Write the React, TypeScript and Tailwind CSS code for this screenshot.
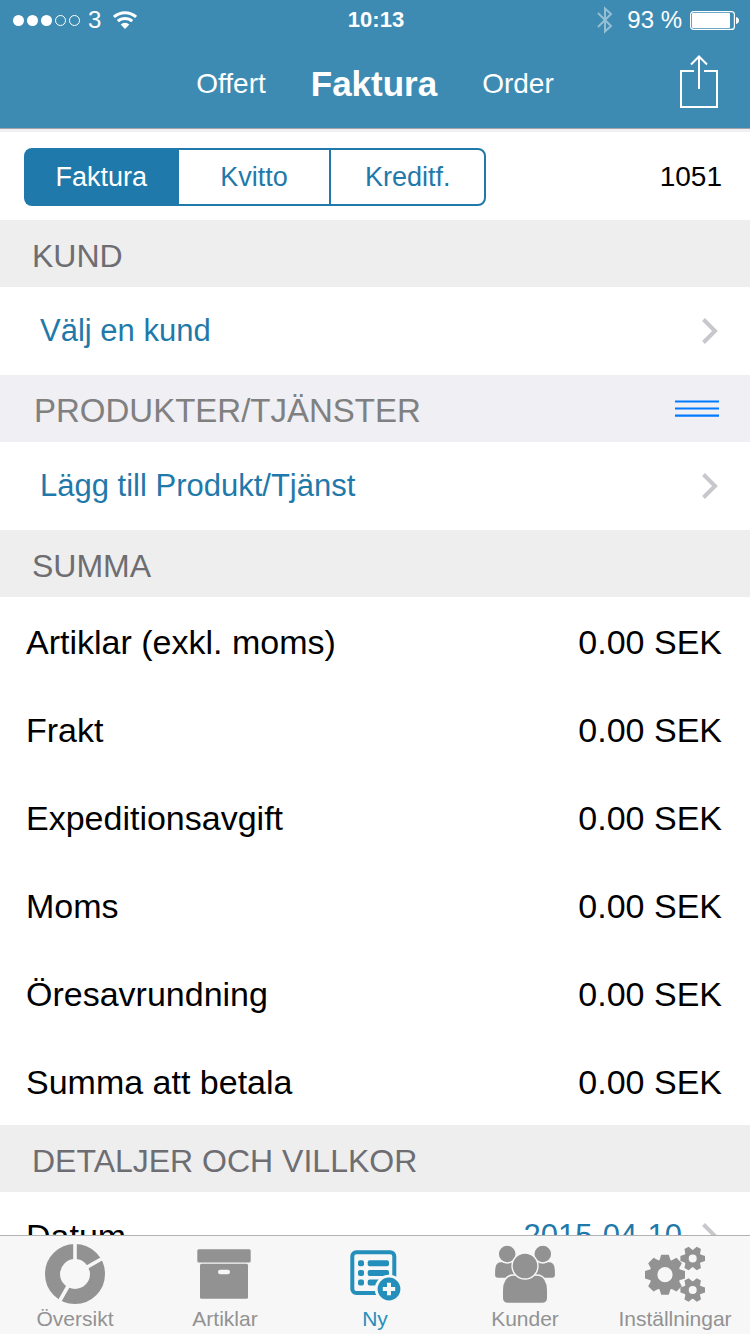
import React, { useState } from "react";

const totals = [
  { label: "Artiklar (exkl. moms)", value: "0.00 SEK" },
  { label: "Frakt", value: "0.00 SEK" },
  { label: "Expeditionsavgift", value: "0.00 SEK" },
  { label: "Moms", value: "0.00 SEK" },
  { label: "Öresavrundning", value: "0.00 SEK" },
  { label: "Summa att betala", value: "0.00 SEK" },
];

const Chevron: React.FC = () => (
  <svg className="w-4 h-[26px] shrink-0" viewBox="0 0 16 26" fill="none" stroke="#c7c7cc" strokeWidth="4" aria-hidden="true">
    <path d="M1.5 1.5L13 13L1.5 24.5" />
  </svg>
);

const StatusBar: React.FC = () => (
  <div className="grid grid-cols-[1fr_auto_1fr] items-center h-10 pl-[13px] pr-[11px] text-2xl leading-none">
    <div className="flex items-center">
      <svg className="w-[67px] h-[11px]" viewBox="0 0 67 11" fill="#fff" aria-hidden="true">
        <circle cx="5.5" cy="5.5" r="5.5" />
        <circle cx="19.5" cy="5.5" r="5.5" />
        <circle cx="33.5" cy="5.5" r="5.5" />
        <g fill="none" stroke="#fff" strokeWidth="1">
          <circle cx="47.5" cy="5.5" r="5" />
          <circle cx="61.5" cy="5.5" r="5" />
        </g>
      </svg>
      <span className="ml-2">3</span>
      <svg className="ml-3 w-6 h-[18px]" viewBox="0 0 24 18" fill="none" stroke="#fff" strokeWidth="3" aria-hidden="true">
        <path d="M0.9 6A16.5 16.5 0 0 1 23.1 6" />
        <path d="M4.8 10.2A10.6 10.6 0 0 1 19.2 10.2" />
        <path d="M12 18L7.7 13.4A6.3 6.3 0 0 1 16.3 13.4Z" fill="#fff" stroke="none" />
      </svg>
    </div>
    <span className="text-[22px] font-bold">10:13</span>
    <div className="flex items-center justify-end">
      <svg className="w-4 h-7 opacity-45" viewBox="0 0 16 28" fill="none" stroke="#fff" strokeWidth="2" aria-hidden="true">
        <path d="M1 7L14 20L8 25.5V2.5L14 8L1 21" />
      </svg>
      <span className="ml-3.5">93 %</span>
      <svg className="ml-2 w-[49px] h-[19px]" viewBox="0 0 49 19" aria-hidden="true">
        <rect x="0.6" y="0.6" width="43.8" height="17.8" rx="3" fill="none" stroke="#fff" strokeWidth="1.2" />
        <rect x="2" y="2" width="38" height="15" rx="1" fill="#fff" />
        <path d="M46 6C48 6.5 49 7.5 49 9.5S48 12.5 46 13Z" fill="#fff" />
      </svg>
    </div>
  </div>
);

const SectionHeader: React.FC<{ title: string }> = ({ title }) => (
  <h2 className="flex items-center h-[67px] pt-1 pl-8 bg-[#eeeeee] text-[32px] leading-none text-[#6d6d72]">{title}</h2>
);

const LinkRow: React.FC<{ label: string }> = ({ label }) => (
  <button type="button" className="flex items-center justify-between w-full h-[88px] pl-10 pr-8 text-[31px] text-[#1f79aa] text-left">
    <span>{label}</span>
    <Chevron />
  </button>
);

const Gear: React.FC<{ cx: number; cy: number; r: number; body: number; hole: number; teeth: number; tooth: number }> = ({ cx, cy, r, body, hole, teeth, tooth }) => (
  <g transform={`translate(${cx} ${cy})`}>
    <circle r={(body + hole) / 2} fill="none" stroke="currentColor" strokeWidth={body - hole} />
    {Array.from({ length: teeth }, (_, i) => (
      <path
        key={i}
        fill="currentColor"
        transform={`rotate(${(360 / teeth) * i})`}
        d={`M${body - 2} ${-tooth - 1}L${r} ${-tooth + 1}V${tooth - 1}L${body - 2} ${tooth + 1}Z`}
      />
    ))}
  </g>
);

const tabs = [
  {
    label: "Översikt",
    icon: (
      <>
        <circle cx="30" cy="30" r="22.5" fill="none" stroke="currentColor" strokeWidth="15" />
        <path d="M30 30V-2M30 30L58 14M30 30L13.5 59" stroke="#f7f7f7" strokeWidth="3.6" />
      </>
    ),
  },
  {
    label: "Artiklar",
    icon: (
      <g fill="currentColor">
        <rect x="2.3" y="5.2" width="53.4" height="13.3" rx="1.5" />
        <rect x="5" y="19.8" width="48" height="35" rx="1.5" />
        <rect x="23" y="25.8" width="12" height="4.4" rx="2.2" fill="#f7f7f7" />
      </g>
    ),
  },
  {
    label: "Ny",
    icon: (
      <>
        <rect x="7.3" y="8.3" width="42" height="40.7" rx="4" fill="none" stroke="currentColor" strokeWidth="4" />
        <g fill="currentColor">
          <rect x="13" y="16.3" width="6" height="6" rx="2" />
          <rect x="13" y="25.9" width="6" height="6" rx="2" />
          <rect x="13" y="35.5" width="6" height="6" rx="2" />
          <rect x="22.7" y="16.3" width="21.3" height="6" rx="2" />
          <rect x="22.7" y="25.9" width="21.3" height="6" rx="2" />
          <rect x="22.7" y="35.5" width="21.3" height="6" rx="2" />
        </g>
        <circle cx="44" cy="45" r="14.2" fill="#f7f7f7" />
        <circle cx="44" cy="45" r="11.4" fill="currentColor" />
        <path d="M44 38.8V51.2M37.8 45H50.2" stroke="#f7f7f7" strokeWidth="4" />
      </>
    ),
  },
  {
    label: "Kunder",
    icon: (
      <g fill="currentColor" stroke="#f7f7f7" strokeWidth="1.4">
        <path d="M5 17.5H25V34.5H3C0.5 34.5 -0.6 33 -0.6 31V27C-0.6 22 1 18 5 17.5Z" />
        <path d="M55 17.5H35V34.5H57C59.5 34.5 60.6 33 60.6 31V27C60.6 22 59 18 55 17.5Z" />
        <circle cx="12.2" cy="10" r="9" />
        <circle cx="47.8" cy="10" r="9" />
        <path d="M18 31H42C49 31 52.7 38 52.7 46V54C52.7 57.5 51 59.4 47 59.4H13C9 59.4 7.3 57.5 7.3 54V46C7.3 38 11 31 18 31Z" />
        <circle cx="30" cy="22" r="13" />
      </g>
    ),
  },
  {
    label: "Inställningar",
    icon: (
      <>
        <Gear cx={20} cy={30.7} r={20} body={15.5} hole={7.6} teeth={8} tooth={4.8} />
        <Gear cx={47.7} cy={14.5} r={12.3} body={8.6} hole={4} teeth={6} tooth={3.4} />
        <Gear cx={47.7} cy={46} r={12.3} body={8.6} hole={4} teeth={6} tooth={3.4} />
      </>
    ),
  },
];

const App: React.FC = () => {
  const [kind, setKind] = useState("Faktura");
  const [tab, setTab] = useState("Ny");

  return (
    <div className="flex flex-col h-screen bg-white text-black font-['Liberation_Sans',Arial,sans-serif]">
      <header className="shrink-0 bg-[#3d8bb3] text-white border-b border-[#a3a3a8]">
        <StatusBar />
        <nav className="grid grid-cols-[1fr_auto_1fr] items-center h-[88px] px-8">
          <div className="col-start-2 flex items-center gap-[45px] text-[28px]">
            <button type="button">Offert</button>
            <button type="button" className="text-[35px] font-bold">Faktura</button>
            <button type="button">Order</button>
          </div>
          <button type="button" aria-label="Dela" className="justify-self-end pb-1">
            <svg className="w-[38px] h-[54px]" viewBox="0 0 38 54" fill="none" stroke="#fff" strokeWidth="2">
              <path d="M14 16H1V52H37V16H24" />
              <path d="M19 1.5V34M11 9.5L19 1.5L27 9.5" />
            </svg>
          </button>
        </nav>
      </header>

      <main className="flex-1 min-h-0 overflow-y-auto [scrollbar-width:none] border-t-3 border-[#efeff4]">
        <div className="flex items-center justify-between h-[88px] pt-0.5 pl-6 pr-7">
          <div className="grid grid-cols-3 w-[462px] h-[58px] border-2 border-[#1f79aa] rounded-lg divide-x-2 divide-[#1f79aa] text-[27px]">
            {["Faktura", "Kvitto", "Kreditf."].map((name) => (
              <button
                key={name}
                type="button"
                aria-pressed={kind === name}
                onClick={() => setKind(name)}
                className={kind === name ? "bg-[#1f79aa] text-white" : "text-[#1f79aa]"}
              >
                {name}
              </button>
            ))}
          </div>
          <span className="text-[28px]">1051</span>
        </div>

        <SectionHeader title="KUND" />
        <LinkRow label="Välj en kund" />

        <div className="flex items-center justify-between h-[67px] pl-[34px] pr-[31px] bg-[#efeff4]">
          <h2 className="pt-1 text-[33px] leading-none text-[#808080]">PRODUKTER/TJÄNSTER</h2>
          <button type="button" aria-label="Ändra ordning">
            <svg className="w-11 h-[17px]" viewBox="0 0 44 17" stroke="#007aff" strokeWidth="2.2">
              <path d="M0 1.5H44M0 8.5H44M0 15.7H44" />
            </svg>
          </button>
        </div>
        <LinkRow label="Lägg till Produkt/Tjänst" />

        <SectionHeader title="SUMMA" />
        <dl className="text-[34px]">
          {totals.map((row) => (
            <div key={row.label} className="flex items-center justify-between h-[88px] pt-0.5 pl-[26px] pr-7">
              <dt>{row.label}</dt>
              <dd>{row.value}</dd>
            </div>
          ))}
        </dl>

        <SectionHeader title="DETALJER OCH VILLKOR" />
        <button type="button" className="flex items-center w-full h-[88px] pl-[26px] pr-8 text-left">
          <span className="flex-1 text-[34px]">Datum</span>
          <span className="mr-5 text-[31px] text-[#1f79aa]">2015-04-10</span>
          <Chevron />
        </button>
      </main>

      {/* Bottom tab bar */}
      <nav className="shrink-0 grid grid-cols-5 pt-2 bg-[#f7f7f7] border-t border-[#b2b2b2]">
        {tabs.map((item) => (
          <button
            key={item.label}
            type="button"
            onClick={() => setTab(item.label)}
            className={`flex flex-col items-center ${tab === item.label ? "text-[#248fba]" : "text-[#929292]"}`}
          >
            <svg className="w-[60px] h-[60px]" viewBox="0 0 60 60" fill="none" aria-hidden="true">
              {item.icon}
            </svg>
            <span className="text-[21px] leading-[30px]">{item.label}</span>
          </button>
        ))}
      </nav>
    </div>
  );
};

export default App;
